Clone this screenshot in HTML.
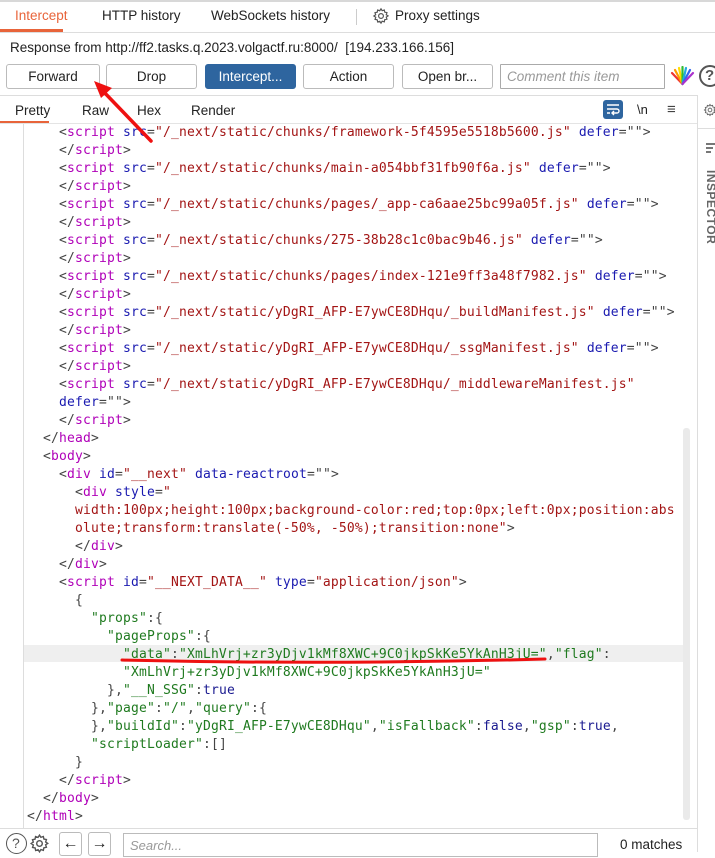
<!DOCTYPE html>
<html><head><meta charset="utf-8"><style>
*{margin:0;padding:0;box-sizing:border-box}
body{width:715px;height:852px;overflow:hidden;background:#fff;font-family:"Liberation Sans","DejaVu Sans",sans-serif;font-size:13px;color:#222;position:relative}
.a{position:absolute}
.tab{position:absolute;top:8px;font-size:13.5px;color:#222}
.btn{position:absolute;top:64px;height:25px;border:1px solid #bbb;border-radius:3px;background:#fff;text-align:center;line-height:23px;font-size:13.5px;color:#222}
.code{position:absolute;left:24px;top:124px;width:659px;font-family:"DejaVu Sans Mono","Liberation Mono",monospace;font-size:13px;letter-spacing:0.17px;white-space:normal;color:#333}
.code div{height:18px;line-height:18px;padding-left:3px;white-space:pre}
.t{color:#b000b8}.n{color:#1a1ab0}.v{color:#a31515}.g{color:#1f7a1f}.k{color:#1a1a90}.p{color:#444}
</style></head><body>
<div class="a" style="left:0;top:0;width:715px;height:2px;background:#d8d8d8"></div>
<div class="tab" style="left:15px;color:#e8643a">Intercept</div>
<div class="a" style="left:0;top:29px;width:63px;height:3px;background:#e8643a"></div>
<div class="tab" style="left:102px">HTTP history</div>
<div class="tab" style="left:211px">WebSockets history</div>
<div class="a" style="left:356px;top:9px;width:1px;height:16px;background:#ccc"></div>
<svg class="a" style="left:372px;top:7px" width="18" height="18" viewBox="0 0 24 24" fill="none" stroke="#555" stroke-width="1.6"><circle cx="12" cy="12" r="3.2"/><path d="M12 2.5l1.6 2.4 2.8-.9.6 2.9 2.9.6-.9 2.8 2.4 1.6-2.4 1.6.9 2.8-2.9.6-.6 2.9-2.8-.9L12 21.5l-1.6-2.4-2.8.9-.6-2.9-2.9-.6.9-2.8L2.5 12l2.4-1.6-.9-2.8 2.9-.6.6-2.9 2.8.9z"/></svg>
<div class="tab" style="left:395px">Proxy settings</div>
<div class="a" style="left:0;top:32px;width:715px;height:1px;background:#ddd"></div>
<div class="a" style="left:10px;top:40px;font-size:13.5px">Response from http://ff2.tasks.q.2023.volgactf.ru:8000/&nbsp; [194.233.166.156]</div>
<div class="btn" style="left:6px;width:94px">Forward</div>
<div class="btn" style="left:106px;width:91px">Drop</div>
<div class="btn" style="left:205px;width:91px;background:#2e659f;border-color:#2e659f;color:#fff">Intercept...</div>
<div class="btn" style="left:303px;width:91px">Action</div>
<div class="btn" style="left:402px;width:91px">Open br...</div>
<div class="btn" style="left:500px;width:165px;text-align:left;padding-left:6px;font-style:italic;color:#999;border-color:#aaa;border-radius:1px">Comment this item</div>
<svg class="a" style="left:670px;top:66px" width="25" height="20" viewBox="0 0 25 20"><g stroke-width="2.2" stroke-linecap="round"><path d="M12.5 18L2 7" stroke="#e33"/><path d="M12.5 18L5 4" stroke="#f90"/><path d="M12.5 18L9 2" stroke="#fd0"/><path d="M12.5 18L12.5 1" stroke="#3b3"/><path d="M12.5 18L16 2" stroke="#2ad"/><path d="M12.5 18L20 4" stroke="#36e"/><path d="M12.5 18L23 7" stroke="#a3c"/></g></svg>
<div class="a" style="left:699px;top:65px;width:22px;height:22px;border:2px solid #555;border-radius:50%;font-size:15px;line-height:18px;padding-left:4px;color:#555;font-weight:bold">?</div>
<div class="a" style="left:0;top:95px;width:697px;height:1px;background:#ddd"></div>
<div class="a" style="left:697px;top:95px;width:1px;height:757px;background:#ddd"></div>
<div class="tab" style="left:15px;top:103px">Pretty</div>
<div class="a" style="left:0;top:121px;width:49px;height:2px;background:#e8643a"></div>
<div class="tab" style="left:82px;top:103px">Raw</div>
<div class="tab" style="left:137px;top:103px">Hex</div>
<div class="tab" style="left:191px;top:103px">Render</div>
<div class="a" style="left:603px;top:100px;width:20px;height:19px;background:#2e659f;border-radius:3px"><svg width="20" height="19" viewBox="0 0 20 19" fill="none" stroke="#fff" stroke-width="1.4"><path d="M4 5h12M4 9h10a2 2 0 0 1 0 4h-4M4 13h3M11 11l-2 2 2 2"/></svg></div>
<div class="a" style="left:637px;top:102px;font-size:13px">\n</div>
<div class="a" style="left:667px;top:101px;font-size:15px;color:#444">≡</div>
<div class="a" style="left:0;top:123px;width:697px;height:1px;background:#e4e4e4"></div>
<svg class="a" style="left:703px;top:101px" width="14" height="18" viewBox="0 0 24 24" fill="none" stroke="#666" stroke-width="1.6"><circle cx="12" cy="12" r="3.2"/><path d="M12 2.5l1.6 2.4 2.8-.9.6 2.9 2.9.6-.9 2.8 2.4 1.6-2.4 1.6.9 2.8-2.9.6-.6 2.9-2.8-.9L12 21.5l-1.6-2.4-2.8.9-.6-2.9-2.9-.6.9-2.8L2.5 12l2.4-1.6-.9-2.8 2.9-.6.6-2.9 2.8.9z"/></svg>
<div class="a" style="left:698px;top:128px;width:17px;height:1px;background:#ddd"></div>
<div class="a" style="left:706px;top:143px;width:9px;height:1.5px;background:#777"></div>
<div class="a" style="left:706px;top:147px;width:7px;height:1.5px;background:#777"></div>
<div class="a" style="left:706px;top:151px;width:5px;height:1.5px;background:#777"></div>
<div class="a" style="left:718px;top:170px;transform:rotate(90deg);transform-origin:0 0;font-size:12px;font-weight:bold;color:#666;letter-spacing:0.5px">INSPECTOR</div>
<div class="a" style="left:23px;top:124px;width:1px;height:704px;background:#ddd"></div>
<div class="a" style="left:24px;top:645px;width:659px;height:17px;background:#efefef"></div>
<div class="a" style="left:683px;top:428px;width:7px;height:392px;background:#eaeaea;border-radius:3px"></div>
<div class="code"><div>    <span class="p">&lt;</span><span class="t">script</span> <span class="n">src</span><span class="p">=</span><span class="v">"/_next/static/chunks/framework-5f4595e5518b5600.js"</span> <span class="n">defer</span><span class="p">=""&gt;</span></div><div>    <span class="p">&lt;/</span><span class="t">script</span><span class="p">&gt;</span></div><div>    <span class="p">&lt;</span><span class="t">script</span> <span class="n">src</span><span class="p">=</span><span class="v">"/_next/static/chunks/main-a054bbf31fb90f6a.js"</span> <span class="n">defer</span><span class="p">=""&gt;</span></div><div>    <span class="p">&lt;/</span><span class="t">script</span><span class="p">&gt;</span></div><div>    <span class="p">&lt;</span><span class="t">script</span> <span class="n">src</span><span class="p">=</span><span class="v">"/_next/static/chunks/pages/_app-ca6aae25bc99a05f.js"</span> <span class="n">defer</span><span class="p">=""&gt;</span></div><div>    <span class="p">&lt;/</span><span class="t">script</span><span class="p">&gt;</span></div><div>    <span class="p">&lt;</span><span class="t">script</span> <span class="n">src</span><span class="p">=</span><span class="v">"/_next/static/chunks/275-38b28c1c0bac9b46.js"</span> <span class="n">defer</span><span class="p">=""&gt;</span></div><div>    <span class="p">&lt;/</span><span class="t">script</span><span class="p">&gt;</span></div><div>    <span class="p">&lt;</span><span class="t">script</span> <span class="n">src</span><span class="p">=</span><span class="v">"/_next/static/chunks/pages/index-121e9ff3a48f7982.js"</span> <span class="n">defer</span><span class="p">=""&gt;</span></div><div>    <span class="p">&lt;/</span><span class="t">script</span><span class="p">&gt;</span></div><div>    <span class="p">&lt;</span><span class="t">script</span> <span class="n">src</span><span class="p">=</span><span class="v">"/_next/static/yDgRI_AFP-E7ywCE8DHqu/_buildManifest.js"</span> <span class="n">defer</span><span class="p">=""&gt;</span></div><div>    <span class="p">&lt;/</span><span class="t">script</span><span class="p">&gt;</span></div><div>    <span class="p">&lt;</span><span class="t">script</span> <span class="n">src</span><span class="p">=</span><span class="v">"/_next/static/yDgRI_AFP-E7ywCE8DHqu/_ssgManifest.js"</span> <span class="n">defer</span><span class="p">=""&gt;</span></div><div>    <span class="p">&lt;/</span><span class="t">script</span><span class="p">&gt;</span></div><div>    <span class="p">&lt;</span><span class="t">script</span> <span class="n">src</span><span class="p">=</span><span class="v">"/_next/static/yDgRI_AFP-E7ywCE8DHqu/_middlewareManifest.js"</span></div><div>    <span class="n">defer</span><span class="p">=""&gt;</span></div><div>    <span class="p">&lt;/</span><span class="t">script</span><span class="p">&gt;</span></div><div>  <span class="p">&lt;/</span><span class="t">head</span><span class="p">&gt;</span></div><div>  <span class="p">&lt;</span><span class="t">body</span><span class="p">&gt;</span></div><div>    <span class="p">&lt;</span><span class="t">div</span> <span class="n">id</span><span class="p">=</span><span class="v">"__next"</span> <span class="n">data-reactroot</span><span class="p">=""&gt;</span></div><div>      <span class="p">&lt;</span><span class="t">div</span> <span class="n">style</span><span class="p">=</span><span class="v">"</span></div><div>      <span class="v">width:100px;height:100px;background-color:red;top:0px;left:0px;position:abs</span></div><div>      <span class="v">olute;transform:translate(-50%, -50%);transition:none"</span><span class="p">&gt;</span></div><div>      <span class="p">&lt;/</span><span class="t">div</span><span class="p">&gt;</span></div><div>    <span class="p">&lt;/</span><span class="t">div</span><span class="p">&gt;</span></div><div>    <span class="p">&lt;</span><span class="t">script</span> <span class="n">id</span><span class="p">=</span><span class="v">"__NEXT_DATA__"</span> <span class="n">type</span><span class="p">=</span><span class="v">"application/json"</span><span class="p">&gt;</span></div><div>      <span class="p">{</span></div><div>        <span class="g">"props"</span><span class="p">:{</span></div><div>          <span class="g">"pageProps"</span><span class="p">:{</span></div><div>            <span class="g">"data"</span><span class="p">:</span><span class="g">"XmLhVrj+zr3yDjv1kMf8XWC+9C0jkpSkKe5YkAnH3jU="</span><span class="p">,</span><span class="g">"flag"</span><span class="p">:</span></div><div>            <span class="g">"XmLhVrj+zr3yDjv1kMf8XWC+9C0jkpSkKe5YkAnH3jU="</span></div><div>          <span class="p">},</span><span class="g">"__N_SSG"</span><span class="p">:</span><span class="k">true</span></div><div>        <span class="p">},</span><span class="g">"page"</span><span class="p">:</span><span class="g">"/"</span><span class="p">,</span><span class="g">"query"</span><span class="p">:{</span></div><div>        <span class="p">},</span><span class="g">"buildId"</span><span class="p">:</span><span class="g">"yDgRI_AFP-E7ywCE8DHqu"</span><span class="p">,</span><span class="g">"isFallback"</span><span class="p">:</span><span class="k">false</span><span class="p">,</span><span class="g">"gsp"</span><span class="p">:</span><span class="k">true</span><span class="p">,</span></div><div>        <span class="g">"scriptLoader"</span><span class="p">:[]</span></div><div>      <span class="p">}</span></div><div>    <span class="p">&lt;/</span><span class="t">script</span><span class="p">&gt;</span></div><div>  <span class="p">&lt;/</span><span class="t">body</span><span class="p">&gt;</span></div><div><span class="p">&lt;/</span><span class="t">html</span><span class="p">&gt;</span></div></div>
<svg class="a" style="left:0;top:0" width="715" height="852"><path d="M122 660 Q330 665 545 659" stroke="#e11" stroke-width="3" fill="none" stroke-linecap="round"/><path d="M151 141 L101 89" stroke="#e11" stroke-width="3.5" stroke-linecap="round"/><path d="M94 81 L112 88 L101 98 Z" fill="#e11"/></svg>
<div class="a" style="left:0;top:828px;width:697px;height:1px;background:#ddd"></div>
<div class="a" style="left:6px;top:833px;width:21px;height:21px;border:1.5px solid #555;border-radius:50%;font-size:14px;line-height:18px;padding-left:5px;color:#555">?</div>
<svg class="a" style="left:29px;top:833px" width="21" height="21" viewBox="0 0 24 24" fill="none" stroke="#555" stroke-width="1.6"><circle cx="12" cy="12" r="3.2"/><path d="M12 2.5l1.6 2.4 2.8-.9.6 2.9 2.9.6-.9 2.8 2.4 1.6-2.4 1.6.9 2.8-2.9.6-.6 2.9-2.8-.9L12 21.5l-1.6-2.4-2.8.9-.6-2.9-2.9-.6.9-2.8L2.5 12l2.4-1.6-.9-2.8 2.9-.6.6-2.9 2.8.9z"/></svg>
<div class="a" style="left:59px;top:832px;width:23px;height:24px;border:1px solid #bbb;border-radius:3px;text-align:center;font-size:16px;line-height:22px">←</div>
<div class="a" style="left:88px;top:832px;width:23px;height:24px;border:1px solid #bbb;border-radius:3px;text-align:center;font-size:16px;line-height:22px">→</div>
<div class="a" style="left:123px;top:833px;width:475px;height:24px;border:1px solid #bbb;padding-left:6px;font-style:italic;color:#999;line-height:24px">Search...</div>
<div class="a" style="left:620px;top:837px;font-size:13.5px">0 matches</div>
</body></html>
